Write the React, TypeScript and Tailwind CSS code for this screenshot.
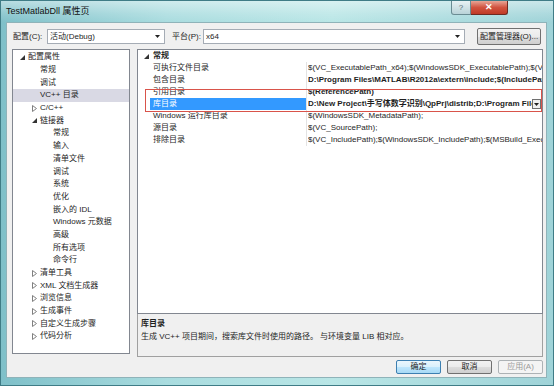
import React from "react";

const FONT = { fontFamily: '"Liberation Sans", "Noto Sans CJK SC", sans-serif' };

function Expanded() {
  return (
    <svg width="5" height="5" viewBox="0 0 5 5" className="shrink-0">
      <polygon points="5,0 5,5 0,5" fill="#333" />
    </svg>
  );
}
function Collapsed() {
  return (
    <svg width="5" height="7" viewBox="0 0 5 7" className="shrink-0">
      <polygon points="0.5,0.5 4.5,3.5 0.5,6.5" fill="none" stroke="#808080" strokeWidth="1" />
    </svg>
  );
}
function Arrow() {
  return (
    <svg width="5" height="3" viewBox="0 0 5 3">
      <polygon points="0,0 5,0 2.5,3" fill="#222" />
    </svg>
  );
}

type TreeItem = { label: string; level: number; kind?: "exp" | "col"; sel?: boolean };
const tree: TreeItem[] = [
  { label: "配置属性", level: 0, kind: "exp" },
  { label: "常规", level: 1 },
  { label: "调试", level: 1 },
  { label: "VC++ 目录", level: 1, sel: true },
  { label: "C/C++", level: 1, kind: "col" },
  { label: "链接器", level: 1, kind: "exp" },
  { label: "常规", level: 2 },
  { label: "输入", level: 2 },
  { label: "清单文件", level: 2 },
  { label: "调试", level: 2 },
  { label: "系统", level: 2 },
  { label: "优化", level: 2 },
  { label: "嵌入的 IDL", level: 2 },
  { label: "Windows 元数据", level: 2 },
  { label: "高级", level: 2 },
  { label: "所有选项", level: 2 },
  { label: "命令行", level: 2 },
  { label: "清单工具", level: 1, kind: "col" },
  { label: "XML 文档生成器", level: 1, kind: "col" },
  { label: "浏览信息", level: 1, kind: "col" },
  { label: "生成事件", level: 1, kind: "col" },
  { label: "自定义生成步骤", level: 1, kind: "col" },
  { label: "代码分析", level: 1, kind: "col" },
];

type Row = { name: string; value: string; bold?: boolean; sel?: boolean };
const rows: Row[] = [
  { name: "可执行文件目录", value: "$(VC_ExecutablePath_x64);$(WindowsSDK_ExecutablePath);$(VS_ExecutablePath);$(MSBuild_ExecutablePath)" },
  { name: "包含目录", value: "D:\\Program Files\\MATLAB\\R2012a\\extern\\include;$(IncludePath)", bold: true },
  { name: "引用目录", value: "$(ReferencePath)", bold: true },
  { name: "库目录", value: "D:\\New Project\\手写体数字识别\\QpPrj\\distrib;D:\\Program Files", bold: true, sel: true },
  { name: "Windows 运行库目录", value: "$(WindowsSDK_MetadataPath);" },
  { name: "源目录", value: "$(VC_SourcePath);" },
  { name: "排除目录", value: "$(VC_IncludePath);$(WindowsSDK_IncludePath);$(MSBuild_ExecutablePath)" },
];

export default function App() {
  return (
    <div
      className="relative w-[554px] h-[386px] overflow-hidden flex flex-col border border-[#3f7c86] bg-[linear-gradient(90deg,#7fc0c9_0%,#a9dcdf_30%,#b9e6e6_60%,#9fd3d8_100%)] text-[#1e1e1e]"
      style={FONT}
    >
      {/* title bar */}
      <div className="h-[21px] shrink-0 flex items-start bg-[linear-gradient(180deg,rgba(255,255,255,0.45)_0%,rgba(255,255,255,0.15)_60%,rgba(255,255,255,0)_100%)]">
        <div className="pl-[5px] pt-[5px] text-[9px] leading-[10px] text-[#111]">TestMatlabDll 属性页</div>
        <div className="ml-auto mr-[45px] flex">
          <div className="w-[20px] h-[14px] rounded-bl-[3px] border border-t-0 border-[#6a8c93] bg-[linear-gradient(180deg,#e8f2f4,#b9d3d8)] flex items-center justify-center text-[8px] leading-[8px] text-[#5a6f75]">?</div>
          <div className="w-[37px] h-[14px] rounded-br-[3px] border border-t-0 border-l-0 border-[#6d2a22] bg-[linear-gradient(180deg,#e8a596_0%,#d1533f_50%,#c03a26_100%)] flex items-center justify-center text-[9px] leading-[9px] font-bold text-white">✕</div>
        </div>
      </div>

      {/* client area */}
      <div className="ml-[5px] mr-[6px] h-[356px] shrink-0 bg-[#f0f0f0] border border-[#8fb3b9] flex flex-col text-[8px] leading-[10px]">
        {/* config row */}
        <div className="flex items-center mt-[5px] h-[17px]">
          <span className="ml-[6px] w-[34px]">配置(C):</span>
          <div className="w-[118px] h-[15px] bg-white border border-[#a5acb5] flex items-center pl-[2px] pr-[4px]">
            <span className="flex-1">活动(Debug)</span>
            <Arrow />
          </div>
          <span className="ml-[7px] w-[31px]">平台(P):</span>
          <div className="w-[262px] h-[15px] bg-white border border-[#a5acb5] flex items-center pl-[2px] pr-[4px]">
            <span className="flex-1">x64</span>
            <Arrow />
          </div>
          <div className="ml-[12px] w-[64px] h-[17px] rounded-[2px] border border-[#707070] bg-[linear-gradient(180deg,#f2f2f2_0%,#ebebeb_50%,#dddddd_51%,#cfcfcf_100%)] flex items-center justify-center">
            配置管理器(O)...
          </div>
        </div>

        {/* main */}
        <div className="flex mt-[4px] h-[308px]">
          {/* tree */}
          <div className="ml-[5px] w-[118px] h-[305px] bg-white border border-[#828790] pt-[1px] flex flex-col">
            {tree.map((t, i) => (
              <div
                key={i}
                className={`h-[12.7px] flex items-center ${t.sel ? "bg-[#d9d9e4]" : ""}`}
              >
                <div
                  className={`flex items-center justify-end pr-[3px] ${
                    t.level === 0 ? "w-[15px]" : t.level === 1 ? "w-[27px]" : "w-[40px]"
                  }`}
                >
                  {t.kind === "exp" ? <Expanded /> : t.kind === "col" ? <Collapsed /> : null}
                </div>
                <span className={t.level === 0 ? "" : ""}>{t.label}</span>
              </div>
            ))}
          </div>

          {/* right */}
          <div className="ml-[7px] w-[406px] flex flex-col">
            <div className="relative h-[265px] bg-white border border-[#828790] overflow-hidden">
              <div className="h-[12px] flex items-center">
                <div className="w-[15px] flex justify-end pr-[4px]"><Expanded /></div>
                <span className="font-bold">常规</span>
              </div>
              {rows.map((r, i) => (
                <div key={i} className="h-[12px] flex items-center">
                  <div
                    className={`ml-[12px] w-[157px] h-full flex items-center pl-[3px] border-r border-[#e3e3e3] ${
                      r.sel ? "bg-[#3399ff] text-white" : ""
                    }`}
                  >
                    {r.name}
                  </div>
                  <div className="flex-1 min-w-0 h-full flex items-center pl-[1px]">
                    <span className={`whitespace-nowrap overflow-hidden flex-1 ${r.bold ? "font-bold" : ""}`}>{r.value}</span>
                    {r.sel && (
                      <div className="w-[9px] h-[10px] mr-[1px] border border-[#707070] bg-[#f0f0f0] flex items-center justify-center shrink-0">
                        <Arrow />
                      </div>
                    )}
                  </div>
                </div>
              ))}
              {/* red annotation box */}
              <div className="absolute left-[7px] top-[39px] w-[397px] h-[23px] border border-[#d9534a] pointer-events-none" />
            </div>
            <div className="h-[43px] bg-[#f0f0f0] border border-t-0 border-[#a0a0a0] pl-[3px] pt-[5px]">
              <div className="font-bold">库目录</div>
              <div className="mt-[3px]">生成 VC++ 项目期间，搜索库文件时使用的路径。 与环境变量 LIB 相对应。</div>
            </div>
          </div>
        </div>

        {/* buttons */}
        <div className="flex justify-end gap-[6px] mr-[3px] mt-[3px]">
          <div className="w-[45px] h-[14px] rounded-[2px] border border-[#3c7fb1] bg-[linear-gradient(180deg,#eaf6fd_0%,#d9f0fc_50%,#bee6fd_51%,#a7d9f5_100%)] flex items-center justify-center">确定</div>
          <div className="w-[45px] h-[14px] rounded-[2px] border border-[#707070] bg-[linear-gradient(180deg,#f2f2f2_0%,#ebebeb_50%,#dddddd_51%,#cfcfcf_100%)] flex items-center justify-center">取消</div>
          <div className="w-[45px] h-[14px] rounded-[2px] border border-[#adb2b5] bg-[#f4f4f4] text-[#9a9a9a] flex items-center justify-center">应用(A)</div>
        </div>
      </div>
    </div>
  );
}
